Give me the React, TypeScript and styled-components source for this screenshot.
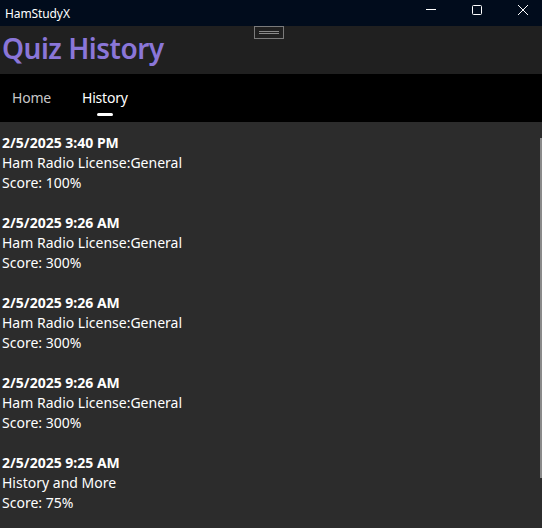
import React from "react";
import styled, { createGlobalStyle } from "styled-components";

const Global = createGlobalStyle`
  html, body { margin: 0; padding: 0; background: #2c2c2c; }
  body { font-family: "Noto Sans", "Open Sans", sans-serif; }
  #root { width: 542px; height: 528px; overflow: hidden; }
`;

const Window = styled.div`
  width: 542px;
  height: 528px;
  display: flex;
  flex-direction: column;
  background: #2c2c2c;
`;

const TitleBar = styled.div`
  height: 26px;
  flex: none;
  background: #010c1c;
  display: flex;
  align-items: center;
  justify-content: space-between;
`;

const AppName = styled.span`
  color: #ffffff;
  font-size: 12px;
  padding-left: 5px;
  letter-spacing: -0.1px;
`;

const Controls = styled.div`
  display: flex;
  height: 100%;
`;

const CtrlButton = styled.div`
  width: 46px;
  height: 100%;
  padding: 5px 0 0 8px;
  box-sizing: border-box;
  display: flex;
  align-items: flex-start;
  justify-content: center;
`;

const Header = styled.div`
  position: relative;
  height: 48px;
  flex: none;
  background: #202020;
  display: flex;
  align-items: center;
`;

const Title = styled.h1`
  margin: -4px 0 0 0;
  padding-left: 2px;
  color: #8a76d8;
  font-size: 28px;
  font-weight: 600;
  line-height: 1;
  letter-spacing: -0.5px;
`;

const DragHandle = styled.div`
  position: absolute;
  left: 254px;
  top: 0;
  width: 28px;
  height: 11px;
  border: 1px solid #7a7a7a;
  display: flex;
  flex-direction: column;
  justify-content: center;
  align-items: center;
  gap: 1px;
  &::before, &::after {
    content: "";
    width: 20px;
    height: 1px;
    background: #8a8a8a;
  }
`;

const Nav = styled.nav`
  height: 48px;
  flex: none;
  background: #000000;
  display: flex;
  align-items: center;
  padding-left: 12px;
  gap: 31px;
`;

const Tab = styled.div<{ $active?: boolean }>`
  position: relative;
  font-size: 14px;
  letter-spacing: -0.2px;
  color: ${(p) => (p.$active ? "#ffffff" : "#c8c8c8")};
  padding-bottom: 1px;
  &::after {
    content: "";
    display: ${(p) => (p.$active ? "block" : "none")};
    position: absolute;
    left: 50%;
    transform: translateX(-50%);
    bottom: -8px;
    width: 16px;
    height: 3px;
    border-radius: 2px;
    background: #ffffff;
  }
`;

const Content = styled.div`
  position: relative;
  flex: 1;
  background: #2c2c2c;
  padding: 11px 0 0 2px;
  display: flex;
  flex-direction: column;
  gap: 20px;
  overflow: hidden;
`;

const ScrollBar = styled.div`
  position: absolute;
  right: 0;
  top: 16px;
  width: 2px;
  height: 340px;
  background: #8a8a8a;
`;

const Entry = styled.div`
  display: flex;
  flex-direction: column;
  color: #ffffff;
  font-size: 14px;
  line-height: 20px;
`;

const When = styled.div`
  font-weight: 700;
`;

const Line = styled.div``;

const entries = [
  { when: "2/5/2025 3:40 PM", what: "Ham Radio License:General", score: "100%" },
  { when: "2/5/2025 9:26 AM", what: "Ham Radio License:General", score: "300%" },
  { when: "2/5/2025 9:26 AM", what: "Ham Radio License:General", score: "300%" },
  { when: "2/5/2025 9:26 AM", what: "Ham Radio License:General", score: "300%" },
  { when: "2/5/2025 9:25 AM", what: "History and More", score: "75%" },
];

export default function App() {
  return (
    <Window>
      <Global />
      <TitleBar>
        <AppName>HamStudyX</AppName>
        <Controls>
          <CtrlButton>
            <svg width="10" height="10" viewBox="0 0 10 10">
              <path d="M0 4.5h10" stroke="#fff" strokeWidth="1" />
            </svg>
          </CtrlButton>
          <CtrlButton>
            <svg width="10" height="10" viewBox="0 0 10 10">
              <rect x="0.5" y="0.5" width="9" height="9" rx="1" fill="none" stroke="#fff" strokeWidth="1" />
            </svg>
          </CtrlButton>
          <CtrlButton>
            <svg width="10" height="10" viewBox="0 0 10 10">
              <path d="M0 0L10 10M10 0L0 10" stroke="#fff" strokeWidth="1" />
            </svg>
          </CtrlButton>
        </Controls>
      </TitleBar>
      <Header>
        <Title>Quiz History</Title>
        <DragHandle />
      </Header>
      <Nav>
        <Tab>Home</Tab>
        <Tab $active>History</Tab>
      </Nav>
      <Content>
        {entries.map((e, i) => (
          <Entry key={i}>
            <When>{e.when}</When>
            <Line>{e.what}</Line>
            <Line>Score: {e.score}</Line>
          </Entry>
        ))}
        <ScrollBar />
      </Content>
    </Window>
  );
}
